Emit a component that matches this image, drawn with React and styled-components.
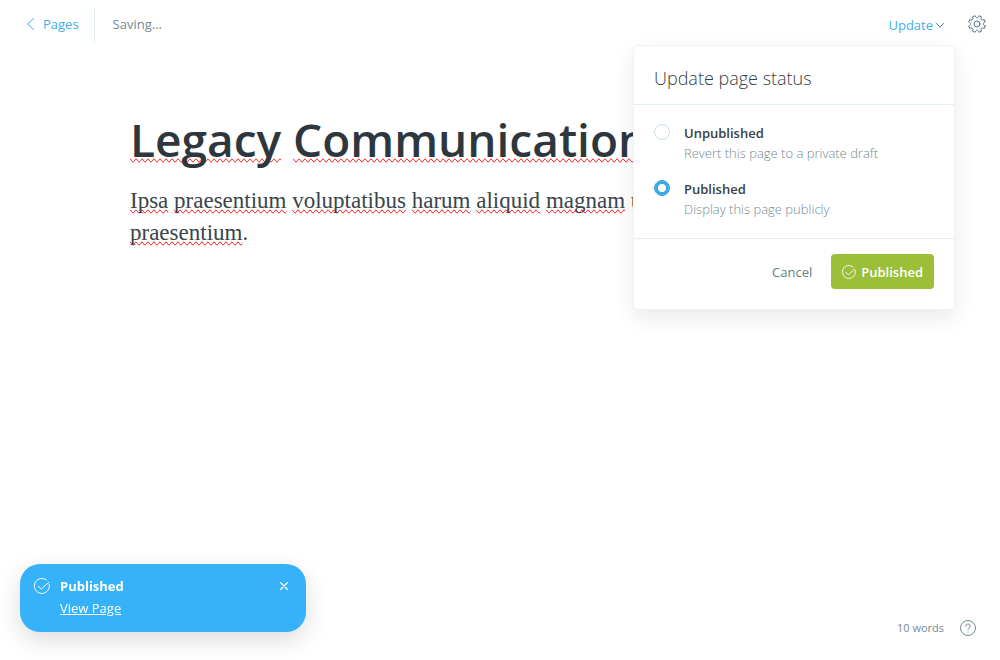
import React, { useState } from "react";
import styled, { createGlobalStyle } from "styled-components";

const Global = createGlobalStyle`
  *, *::before, *::after { box-sizing: border-box; }
  html, body, #root { height: 100%; }
  body {
    margin: 0;
    background: #fff;
    color: #2e373d;
    font-family: "Open Sans", "Noto Sans", sans-serif;
    font-size: 13px;
    line-height: 20px;
  }
  button { font: inherit; border: 0; margin: 0; padding: 0; background: none; cursor: pointer; }
  svg { display: block; flex: none; }
  h1, h2, p, fieldset { margin: 0; padding: 0; border: 0; }
`;

const Page = styled.div`
  display: flex;
  flex-direction: column;
  min-height: 100%;
`;

const Header = styled.header`
  display: flex;
  align-items: center;
  justify-content: space-between;
  height: 48px;
  padding: 0 14px 0 26px;
`;

const HeaderGroup = styled.div`
  display: flex;
  align-items: center;
`;

const BackLink = styled.a`
  display: flex;
  align-items: center;
  gap: 7px;
  height: 35px;
  padding-right: 15px;
  border-right: 1px solid #e3eef5;
  color: #3eb0ef;
  text-decoration: none;
`;

const SaveState = styled.span`
  padding-left: 18px;
  color: #738a94;
`;

const Menu = styled.div`
  position: relative;
  margin-right: 24px;
`;

const MenuButton = styled.button`
  display: flex;
  align-items: center;
  gap: 3px;
  padding-top: 2px;
  color: #3eb0ef;
`;

const IconButton = styled.button`
  display: flex;
  align-items: center;
  color: ${(p) => p.$color || "#738a94"};
`;

const Panel = styled.form`
  position: absolute;
  z-index: 2;
  top: 32px;
  right: -11px;
  width: 322px;
  border: 1px solid #eff1f3;
  border-radius: 5px;
  background: #fff;
  box-shadow: 0 8px 20px rgba(40, 50, 60, 0.1);
`;

const PanelTitle = styled.h2`
  padding: 20px 20px 14px;
  border-bottom: 1px solid #e3eef5;
  color: #343f44;
  font-size: 18px;
  font-weight: 300;
  line-height: 24px;
`;

const Options = styled.fieldset`
  display: flex;
  flex-direction: column;
  gap: 16px;
  padding: 18px 20px 19px;
`;

const Option = styled.label`
  display: flex;
  gap: 14px;
  cursor: pointer;
`;

const Radio = styled.input`
  appearance: none;
  flex: none;
  width: 16px;
  height: 16px;
  margin: 1px 0 0;
  border: 1px solid #cbdeea;
  border-radius: 50%;
  background: #fff;

  &:checked {
    border-color: #2b95d8;
    box-shadow: inset 0 0 0 3px #35a8ec;
  }
`;

const OptionText = styled.span`
  display: flex;
  flex-direction: column;
`;

const OptionName = styled.strong`
  color: #394047;
  font-weight: 600;
`;

const OptionHint = styled.span`
  color: #738a94;
  font-weight: 300;
`;

const PanelFooter = styled.div`
  display: flex;
  align-items: center;
  justify-content: flex-end;
  gap: 19px;
  padding: 15px 20px 20px;
  border-top: 1px solid #e3eef5;
`;

const CancelButton = styled.button`
  color: #667c87;
`;

const PublishButton = styled.button`
  display: flex;
  align-items: center;
  gap: 5px;
  height: 35px;
  padding: 0 11px;
  border-radius: 4px;
  background: #9bbf38;
  color: #fff;
  font-weight: 600;
`;

const Editor = styled.main`
  flex: 1;
  width: 100%;
  max-width: 740px;
  margin: 0 auto;
  padding-top: 63px;
`;

const Title = styled.h1`
  outline: none;
  color: #2e373d;
  font-size: 46px;
  font-weight: 600;
  line-height: 56px;
`;

const Body = styled.p`
  margin-top: 18px;
  outline: none;
  color: #3a444b;
  font-family: "Liberation Serif", serif;
  font-size: 23px;
  line-height: 32px;
`;

const Misspelled = styled.span`
  text-decoration-line: spelling-error;
`;

const Footer = styled.footer`
  display: flex;
  align-items: center;
  justify-content: flex-end;
  gap: 16px;
  padding: 0 24px 22px;
  color: #738a94;
  font-size: 11px;
`;

const Toast = styled.aside`
  position: fixed;
  z-index: 3;
  bottom: 28px;
  left: 20px;
  display: flex;
  align-items: flex-start;
  gap: 10px;
  width: 286px;
  padding: 11px 17px 13px 14px;
  border-radius: 20px;
  background: #36b2fa;
  box-shadow: 0 8px 24px rgba(0, 0, 0, 0.14);
  color: #fff;
  line-height: 22px;
`;

const ToastIcon = styled.span`
  display: flex;
  align-items: center;
  height: 22px;
`;

const ToastText = styled.div`
  display: flex;
  flex: 1;
  flex-direction: column;
  align-items: flex-start;
`;

const ToastLink = styled.a`
  color: #fff;
`;

const CheckIcon = ({ size }) => (
  <svg width={size} height={size} viewBox="0 0 16 16" fill="none" stroke="currentColor" strokeLinecap="round" strokeLinejoin="round" aria-hidden="true">
    <path d="M15.2 6.2A7.5 7.5 0 1 1 12.4 1.9" />
    <path d="M4.4 8.2l2.9 3L14.6 4.4" />
  </svg>
);

/* Eight teeth, one every 45 degrees, with a gap on each axis. */
const gearPath = Array.from({ length: 8 }, (_, i) => {
  const at = (deg, r) => {
    const a = ((i * 45 + 22.5 + deg) * Math.PI) / 180;
    return `${(9 + r * Math.cos(a)).toFixed(2)} ${(9 + r * Math.sin(a)).toFixed(2)}`;
  };
  return `${i ? "L" : "M"}${at(-9, 8.5)}L${at(9, 8.5)}C${at(13, 5.6)} ${at(32, 5.6)} ${at(36, 8.5)}`;
}).join("") + "Z";

const GearIcon = () => (
  <svg width="18" height="18" viewBox="0 0 18 18" fill="none" stroke="currentColor" strokeLinecap="round" strokeLinejoin="round" aria-hidden="true">
    <circle cx="9" cy="9" r="3" />
    <path d={gearPath} />
  </svg>
);

export default function App() {
  const [status, setStatus] = useState("published");
  const options = [
    { value: "draft", name: "Unpublished", hint: "Revert this page to a private draft" },
    { value: "published", name: "Published", hint: "Display this page publicly" },
  ];
  const words = ["Ipsa", "praesentium", "voluptatibus", "harum", "aliquid", "magnam"];

  return (
    <Page>
      <Global />
      <Header>
        <HeaderGroup>
          <BackLink href="#pages">
            <svg width="10" height="12" viewBox="0 0 10 12" fill="none" stroke="currentColor" strokeLinecap="round" strokeLinejoin="round" aria-hidden="true">
              <path d="M7.5 .5L1.5 6l6 5.5" />
            </svg>
            Pages
          </BackLink>
          <SaveState>Saving...</SaveState>
        </HeaderGroup>
        <HeaderGroup>
          <Menu>
            <MenuButton type="button" aria-expanded="true">
              Update
              <svg width="8" height="5" viewBox="0 0 8 5" fill="none" stroke="#55707e" strokeLinecap="round" strokeLinejoin="round" aria-hidden="true">
                <path d="M.5 .5L4 4.2L7.5 .5" />
              </svg>
            </MenuButton>
            <Panel onSubmit={(e) => e.preventDefault()}>
              <PanelTitle>Update page status</PanelTitle>
              <Options aria-label="Page status">
                {options.map((o) => (
                  <Option key={o.value}>
                    <Radio type="radio" name="status" checked={status === o.value} onChange={() => setStatus(o.value)} />
                    <OptionText>
                      <OptionName>{o.name}</OptionName>
                      <OptionHint>{o.hint}</OptionHint>
                    </OptionText>
                  </Option>
                ))}
              </Options>
              <PanelFooter>
                <CancelButton type="button">Cancel</CancelButton>
                <PublishButton type="submit">
                  <CheckIcon size={14} />
                  Published
                </PublishButton>
              </PanelFooter>
            </Panel>
          </Menu>
          <IconButton type="button" aria-label="Settings" $color="#55707e">
            <GearIcon />
          </IconButton>
        </HeaderGroup>
      </Header>

      <Editor>
        <Title>
          <Misspelled>Legacy</Misspelled> <Misspelled>Communications</Misspelled>
        </Title>
        <Body>
          {words.map((w) => (
            <React.Fragment key={w}>
              <Misspelled>{w}</Misspelled>{" "}
            </React.Fragment>
          ))}
          ut <Misspelled>necessitatibus</Misspelled> et <Misspelled>praesentium</Misspelled>.
        </Body>
      </Editor>

      <Footer>
        10 words
        <IconButton type="button" aria-label="Help">
          <svg width="16" height="16" viewBox="0 0 16 16" fill="none" stroke="currentColor" strokeLinecap="round" aria-hidden="true">
            <circle cx="8" cy="8" r="7.5" />
            <path d="M5.8 6.2a2.2 2.2 0 1 1 3.2 2c-.7.4-1 .8-1 1.6" />
            <path d="M8 12v.1" />
          </svg>
        </IconButton>
      </Footer>

      <Toast role="status">
        <ToastIcon>
          <CheckIcon size={16} />
        </ToastIcon>
        <ToastText>
          <strong>Published</strong>
          <ToastLink href="#view">View Page</ToastLink>
        </ToastText>
        <ToastIcon>
          <IconButton type="button" aria-label="Close" $color="#fff">
            <svg width="10" height="10" viewBox="0 0 10 10" fill="none" stroke="currentColor" strokeWidth="1.2" strokeLinecap="round" aria-hidden="true">
              <path d="M1.500 1.500l7 7M8.500 1.500l-7 7" />
            </svg>
          </IconButton>
        </ToastIcon>
      </Toast>
    </Page>
  );
}
